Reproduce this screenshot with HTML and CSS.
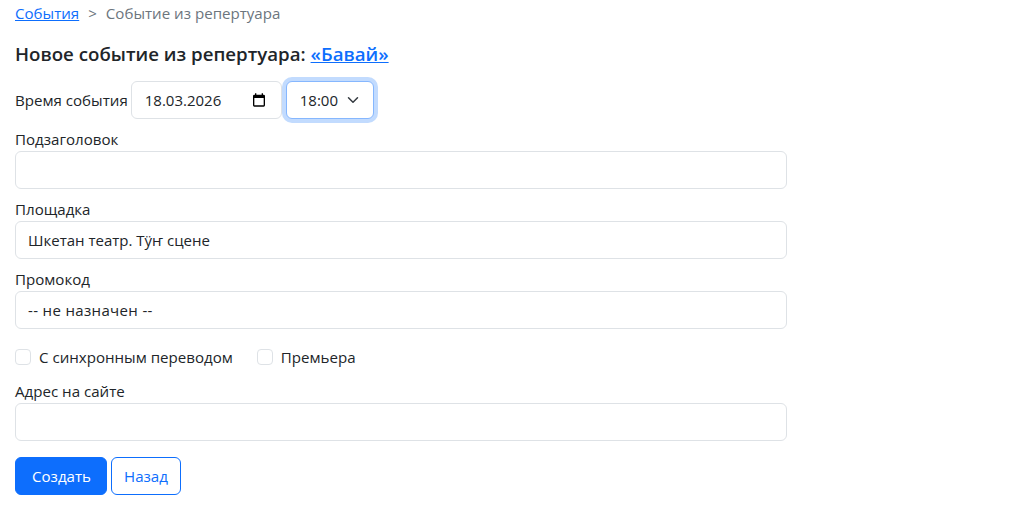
FILE: index.html
```html
<!DOCTYPE html>
<html lang="ru">

<head>
    <meta charset="UTF-8">
    <meta name="viewport" content="width=device-width, initial-scale=1.0">
    <title>Новое событие</title>
    <link rel="stylesheet" href="styles.css">
</head>

<body>
    <nav class="breadcrumb">
        <a href="#">События</a>
        <span class="breadcrumb-sep">&gt;</span>
        <span class="breadcrumb-current">Событие из репертуара</span>
    </nav>

    <h1 class="page-title">Новое событие из репертуара: <a href="#">«Бавай»</a></h1>

    <form class="event-form">
        <div class="time-row">
            <label for="event-date">Время события</label>
            <div class="form-control date-control">
                <input type="text" id="event-date" value="18.03.2026">
                <svg class="calendar-icon" viewBox="0 0 24 24" width="16" height="16">
                    <path d="M19 4h-1V2h-2v2H8V2H6v2H5a2 2 0 0 0-2 2v14a2 2 0 0 0 2 2h14a2 2 0 0 0 2-2V6a2 2 0 0 0-2-2zm0 16H5V9h14v11z" fill="#000"/>
                </svg>
            </div>
            <div class="form-control time-control">
                <span>18:00</span>
                <svg class="chevron-icon" viewBox="0 0 16 16" width="16" height="12">
                    <path d="m2 5 6 6 6-6" fill="none" stroke="#343a40" stroke-width="2" stroke-linecap="round" stroke-linejoin="round"/>
                </svg>
            </div>
        </div>

        <div class="form-group">
            <label for="subtitle">Подзаголовок</label>
            <input class="form-control" type="text" id="subtitle">
        </div>

        <div class="form-group">
            <label for="venue">Площадка</label>
            <input class="form-control" type="text" id="venue" value="Шкетан театр. Тӱҥ сцене">
        </div>

        <div class="form-group">
            <label for="promo">Промокод</label>
            <input class="form-control promo-input" type="text" id="promo" value="-- не назначен --">
        </div>

        <div class="check-row">
            <label class="check"><input type="checkbox"> С синхронным переводом</label>
            <label class="check"><input type="checkbox"> Премьера</label>
        </div>

        <div class="form-group">
            <label for="url">Адрес на сайте</label>
            <input class="form-control" type="text" id="url">
        </div>

        <div class="form-buttons">
            <button type="submit" class="btn btn-primary">Создать</button>
            <a href="#" class="btn btn-outline">Назад</a>
        </div>
    </form>
</body>

</html>
```

FILE: styles.css
```css
body {
    font-family: "Open Sans", "Noto Sans", Arial, sans-serif;
    font-size: 15.1px;
    line-height: 24px;
    color: #212529;
    background-color: #fff;
    margin: 0;
    padding: 1px 15px 0;
}

a {
    color: #0d6efd;
}

.breadcrumb {
    height: 24px;
    display: flex;
    gap: 9px;
}

.breadcrumb-sep,
.breadcrumb-current {
    color: #6c757d;
}

.page-title {
    font-size: 18.7px;
    font-weight: 600;
    line-height: 28px;
    margin: 15px 0 13px;
}

.event-form {
    width: 772px;
}

.time-row {
    display: flex;
    align-items: center;
    gap: 3px;
}

.form-control {
    box-sizing: border-box;
    display: block;
    width: 100%;
    height: 38px;
    padding: 6px 12px;
    font: inherit;
    font-size: 15px;
    color: #212529;
    background: #fff;
    border: 1px solid #dee2e6;
    border-radius: 6px;
}

.date-control {
    display: flex;
    align-items: center;
    justify-content: space-between;
    width: 151px;
    padding: 6px 14px 6px 13px;
}

.date-control input {
    width: 100px;
    padding: 0;
    border: none;
    outline: none;
    font: inherit;
    color: inherit;
}

.time-control {
    display: flex;
    align-items: center;
    justify-content: space-between;
    width: 88px;
    margin-left: 1px;
    padding: 6px 12px 6px 13px;
    border-color: #86b7fe;
    box-shadow: 0 0 0 4px rgba(13, 110, 253, 0.25);
}

.promo-input {
    letter-spacing: 0.35px;
}

.form-group {
    margin-top: 8px;
}

.form-group label {
    display: block;
}

.check-row {
    display: flex;
    gap: 24px;
    margin-top: 14px;
    height: 28px;
}

.check {
    display: flex;
    align-items: center;
    gap: 8px;
}

.check input {
    appearance: none;
    width: 16px;
    height: 16px;
    margin: 0;
    background: #fff;
    border: 1px solid #dee2e6;
    border-radius: 4px;
}

.form-buttons {
    display: flex;
    gap: 4px;
    margin-top: 16px;
}

.btn {
    box-sizing: border-box;
    height: 38px;
    padding: 6px 16px;
    font: inherit;
    line-height: 24px;
    border: 1px solid #0d6efd;
    border-radius: 6px;
    text-decoration: none;
}

.btn-primary {
    width: 92px;
    color: #fff;
    background-color: #0d6efd;
}

.btn-outline {
    width: 70px;
    text-align: center;
    padding: 6px 0;
    color: #0d6efd;
    background: #fff;
}
```
